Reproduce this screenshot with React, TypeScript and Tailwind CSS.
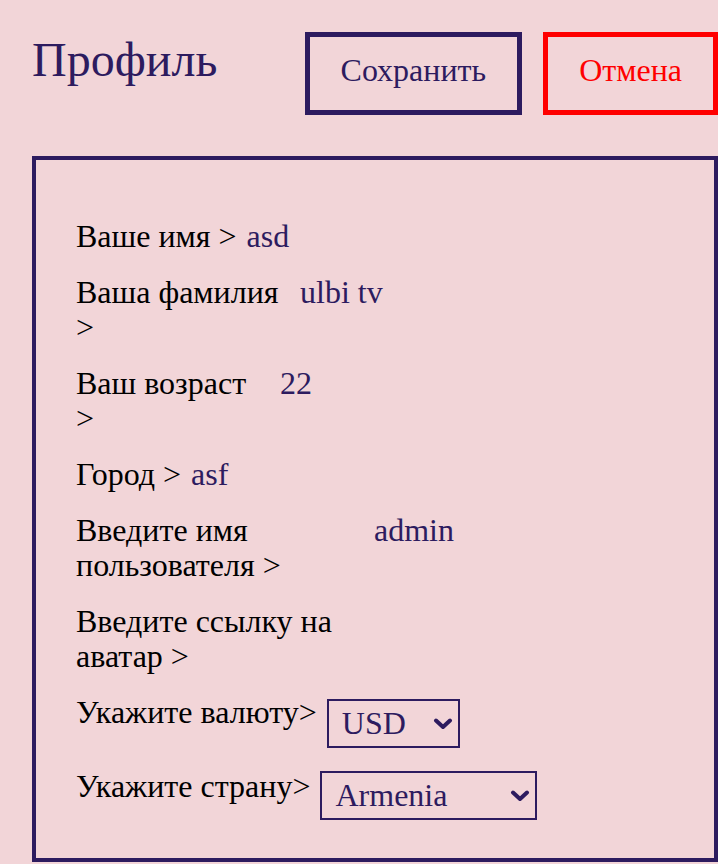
import { useState } from "react";

const purple = "text-[#2d1b5f]";
const serif = "font-['Liberation_Serif',serif]";

type Row = { label: string; value: string; labelCls: string; inputCls: string };

const rows: Row[] = [
  { label: "Ваше имя >", value: "asd", labelCls: "shrink-0", inputCls: "pl-[10px]" },
  { label: "Ваша фамилия >", value: "ulbi tv", labelCls: "w-[214px]", inputCls: "pl-[10px]" },
  { label: "Ваш возраст >", value: "22", labelCls: "w-[186px]", inputCls: "pl-[18px]" },
  { label: "Город >", value: "asf", labelCls: "shrink-0", inputCls: "pl-[10px]" },
  { label: "Введите имя пользователя >", value: "admin", labelCls: "w-[288px]", inputCls: "pl-[10px]" },
  { label: "Введите ссылку на аватар >", value: "", labelCls: "w-[270px]", inputCls: "pl-[10px]" },
];

function Chevron() {
  return (
    <svg width="20" height="12" viewBox="0 0 20 12" className="pointer-events-none absolute right-[7px] top-1/2 -translate-y-1/2">
      <path d="M3 2.5 L10 9 L17 2.5" fill="none" stroke="#2d1b5f" strokeWidth="4" strokeLinecap="round" strokeLinejoin="round" />
    </svg>
  );
}

function SelectRow({ label, value, options, width, top }: { label: string; value: string; options: string[]; width: string; top: string }) {
  const [v, setV] = useState(value);
  return (
    <div className="flex items-start">
      <span className="shrink-0 leading-[35px]">{label}</span>
      <div className={`relative ml-[10px] ${top} ${width}`}>
        <select
          value={v}
          onChange={(e) => setV(e.target.value)}
          className={`block w-full h-[49px] appearance-none rounded-none border-2 border-[#2d1b5f] bg-transparent py-0 pl-[13px] pr-[30px] text-[32px] leading-[35px] ${serif} ${purple} outline-none`}
        >
          {options.map((o) => (
            <option key={o}>{o}</option>
          ))}
        </select>
        <Chevron />
      </div>
    </div>
  );
}

export default function App() {
  const [values, setValues] = useState<string[]>(rows.map((r) => r.value));

  return (
    <div className={`min-h-screen bg-[#f2d5d8] pl-[32px] pt-[32px] pb-[40px] ${serif}`}>
      <div className="flex items-start justify-between">
        <h1 className={`text-[48px] leading-[55px] font-normal ${serif} ${purple}`}>Профиль</h1>
        <div className="flex gap-[21px]">
          <button className={`h-[83px] border-[5px] border-[#2d1b5f] px-[31px] pb-[6px] text-[32px] leading-[35px] ${serif} ${purple}`}>Сохранить</button>
          <button className={`h-[83px] border-[5px] border-[#ff0000] px-[31px] pb-[6px] text-[32px] leading-[35px] ${serif} text-[#ff0000]`}>Отмена</button>
        </div>
      </div>

      <div className="mt-[41px] border-4 border-[#2d1b5f] pl-[40px] pr-[20px] pt-[59px] pb-[38px] text-[32px] leading-[35px] text-black">
        <div className="flex flex-col gap-[21px]">
          {rows.map((r, i) => (
            <div key={r.label} className="flex items-start">
              <span className={`leading-[35px] ${r.labelCls}`}>{r.label}</span>
              <input
                value={values[i]}
                onChange={(e) => setValues((prev) => prev.map((p, j) => (j === i ? e.target.value : p)))}
                className={`block h-[35px] w-[200px] border-0 bg-transparent py-0 pr-0 text-[32px] leading-[35px] ${serif} outline-none ${purple} ${r.inputCls}`}
              />
            </div>
          ))}
          <SelectRow label="Укажите валюту>" value="USD" options={["USD", "EUR", "RUB"]} width="w-[133px]" top="mt-[4px]" />
          <SelectRow label="Укажите страну>" value="Armenia" options={["Armenia", "Russia", "Belarus", "Ukraine", "Kazakhstan"]} width="w-[217px]" top="mt-[2px]" />
        </div>
      </div>
    </div>
  );
}
